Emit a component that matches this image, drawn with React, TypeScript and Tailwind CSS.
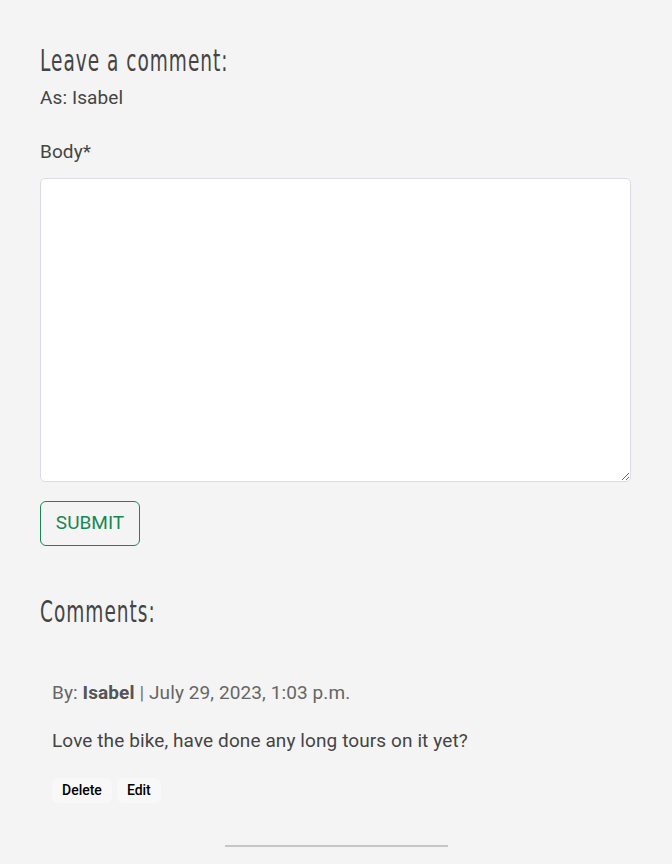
import React, { useState } from 'react';

export default function App() {
  const [body, setBody] = useState('');

  return (
    <div className="min-h-[864px] bg-[#f4f4f4] px-10 pt-[40px] text-[#444] font-['Roboto',sans-serif]">
      {/* Comment form */}
      <h3 className="text-[31px] leading-[40px] tracking-[1.5px] text-[#444] font-['DejaVu_Sans_Condensed',sans-serif] font-light [transform:scaleX(0.665)] origin-left whitespace-nowrap">
        Leave a comment:
      </h3>
      <p className="mt-[4px] text-[19px] leading-[28px] tracking-[0.1px]">As: Isabel</p>

      <form className="mt-[26px]" onSubmit={(e) => e.preventDefault()}>
        <label className="block text-[19px] leading-[28px] tracking-[0.1px]">Body*</label>
        <textarea
          value={body}
          onChange={(e) => setBody(e.target.value)}
          className="mt-[12px] block w-[591px] h-[304px] bg-white border border-[#dcdce4] rounded-[5px] p-3 outline-none"
        />
        <button
          type="submit"
          className="mt-[19px] h-[45px] w-[100px] rounded-[6px] border border-[#198754] text-[#198754] text-[19px] uppercase"
        >
          Submit
        </button>
      </form>

      {/* Comments */}
      <h3 className="mt-[45px] text-[31px] leading-[40px] tracking-[1.5px] text-[#444] font-['DejaVu_Sans_Condensed',sans-serif] font-light [transform:scaleX(0.665)] origin-left whitespace-nowrap">
        Comments:
      </h3>

      <div className="mt-[48px] px-3">
        <p className="text-[19px] leading-[28px] tracking-[0.1px] text-[#666]">
          By: <strong className="font-bold text-[#555]">Isabel</strong> <span className="text-[#777]">|</span> July 29, 2023, 1:03 p.m.
        </p>
        <p className="mt-[20px] text-[19px] leading-[28px] tracking-[0.1px] text-[#444]">
          Love the bike, have done any long tours on it yet?
        </p>
        <div className="mt-[23px] flex gap-[5px]">
          <button className="h-[25px] px-[10px] rounded-[6px] bg-[#f8f8f8] text-[14px] font-medium text-black">Delete</button>
          <button className="h-[25px] px-[10px] rounded-[6px] bg-[#f8f8f8] text-[14px] font-medium text-black">Edit</button>
        </div>
      </div>

      <hr className="mt-[42px] mx-auto w-[223px] border-t-2 border-[#c6c6c6]" />
    </div>
  );
}
